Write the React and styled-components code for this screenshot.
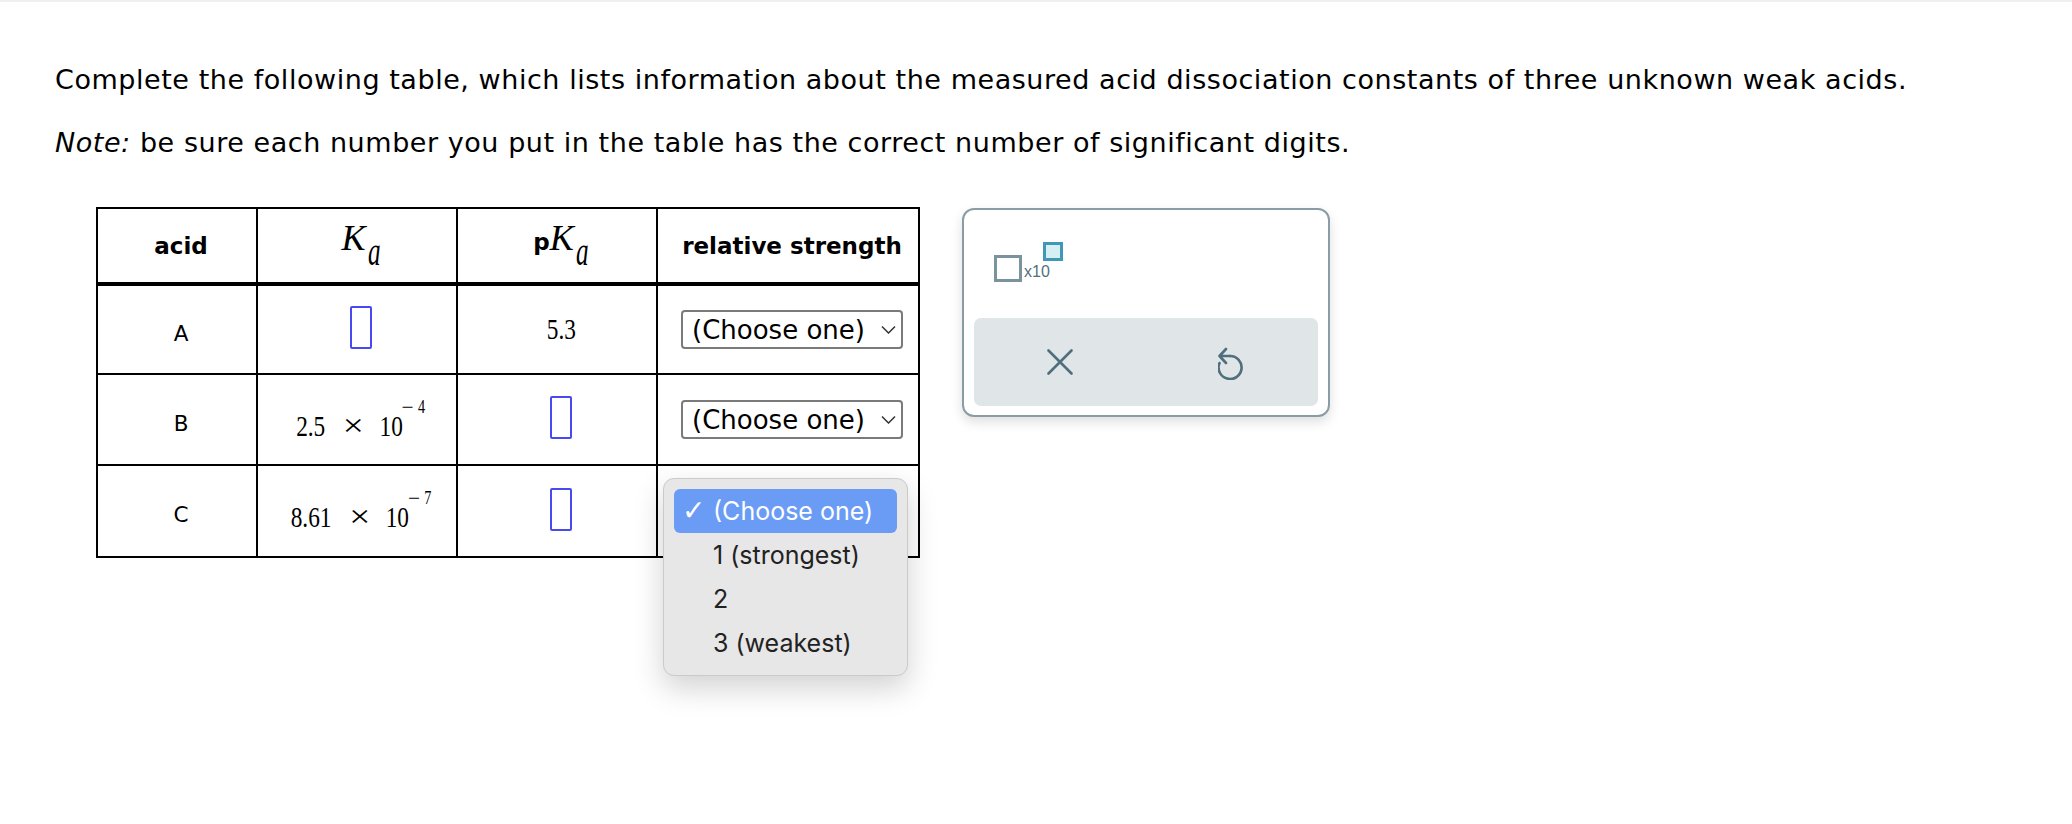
import React from 'react';
import styled, { createGlobalStyle } from 'styled-components';

const GlobalStyle = createGlobalStyle`
  html, body {
    margin: 0;
    padding: 0;
    background: #ffffff;
  }
  body {
    font-family: "DejaVu Sans", Verdana, sans-serif;
    color: #000000;
  }
`;

const Page = styled.div`
  box-sizing: border-box;
  min-height: 100vh;
  border-top: 2px solid #efefef;
  padding: 62px 0 40px 55px;
`;

const Intro = styled.div`
  display: flex;
  flex-direction: column;
  gap: 32px;
`;

const Prompt = styled.p`
  margin: 0;
  font-size: 27px;
  line-height: 31px;
  letter-spacing: 0.55px;
`;

const Workspace = styled.div`
  display: flex;
  align-items: flex-start;
  gap: 42px;
  margin: 49px 0 0 41px;
`;

const Table = styled.table`
  border-collapse: collapse;
  table-layout: fixed;
  width: 822px;
`;

const Row = styled.tr`
  height: ${p => p.$h}px;
`;

const Cell = styled.td`
  position: relative;
  border: 2px solid #000000;
  padding: 0 0 0 8px;
  text-align: center;
  vertical-align: middle;
  font-size: 21.5px;
  font-weight: normal;
`;

const HeadCell = styled(Cell).attrs({ as: 'th' })`
  border-bottom-width: 4px;
  font-size: 23px;
  font-weight: bold;
`;

const Letter = styled.span`
  display: inline-block;
  padding-top: 7px;
`;

const Italic = styled.span`
  font-family: "Liberation Serif", "Times New Roman", serif;
  font-style: italic;
  font-weight: normal;
  font-size: 36px;
  line-height: 1;
`;

const Sub = styled.span`
  display: inline-block;
  font-family: "Liberation Serif", "Times New Roman", serif;
  font-style: italic;
  font-weight: normal;
  font-size: 40px;
  line-height: 1;
  vertical-align: -15px;
  transform: scaleX(0.63);
  transform-origin: left center;
  margin: 0 -7px 0 2px;
`;

const Math = styled.span`
  display: inline-block;
  font-family: "Liberation Serif", "Times New Roman", serif;
  font-size: 29.5px;
  line-height: 1;
  white-space: nowrap;
  transform: scaleX(0.79);
  vertical-align: -5px;
`;

const Times = styled.span`
  display: inline-block;
  margin: 0 25px 0 27px;
  transform: scaleX(1.6) scaleY(1.05);
`;

const Sup = styled.span`
  font-size: 18px;
  vertical-align: 23px;
  margin-left: 1px;
`;

const Minus = styled.span`
  display: inline-block;
  margin-right: 8px;
  transform: scaleX(1.5);
`;

const AnswerBox = styled.span`
  display: inline-block;
  box-sizing: border-box;
  width: 22px;
  height: 43px;
  border: 2.5px solid #4949f2;
  border-radius: 2px;
  vertical-align: middle;
  margin-top: -4px;
`;

const SelectBox = styled.div`
  display: inline-flex;
  align-items: center;
  justify-content: space-between;
  box-sizing: border-box;
  width: 222px;
  height: 39px;
  padding: 0 5px 0 9px;
  border: 2px solid #7a7a7a;
  border-radius: 4px;
  background: #ffffff;
  font-size: 26px;
  line-height: 1;
  color: #000000;
  vertical-align: middle;
`;

const Menu = styled.ul`
  position: absolute;
  left: 5px;
  top: 12px;
  z-index: 5;
  box-sizing: border-box;
  width: 245px;
  margin: 0;
  padding: 10px;
  list-style: none;
  background: #e7e7e7;
  border: 1px solid #cacaca;
  border-radius: 11px;
  box-shadow: 0 12px 30px rgba(0, 0, 0, 0.18);
  font-family: Inter, "Liberation Sans", sans-serif;
  font-size: 25px;
  text-align: left;
`;

const MenuItem = styled.li`
  display: flex;
  align-items: center;
  height: 44px;
  padding-left: 8px;
  border-radius: 6px;
  color: ${p => p.$active ? '#ffffff' : '#222222'};
  background: ${p => p.$active ? '#6a9cf5' : 'transparent'};
`;

const Check = styled.span`
  width: 31px;
  font-family: "DejaVu Sans", sans-serif;
  font-size: 28px;
  font-weight: bold;
  line-height: 1;
`;

const Keypad = styled.div`
  box-sizing: border-box;
  width: 368px;
  height: 209px;
  margin-top: 1px;
  padding: 0 10px 9px;
  display: flex;
  flex-direction: column;
  border: 2px solid #8a9ca6;
  border-radius: 12px;
  background: #ffffff;
  box-shadow: 0 5px 12px rgba(0, 0, 0, 0.13);
`;

const ToolRow = styled.div`
  flex: 1;
  display: flex;
  align-items: flex-start;
  padding: 32px 0 0 20px;
`;

const SciButton = styled.div`
  display: flex;
  align-items: flex-end;
  height: 40px;
`;

const BaseSquare = styled.span`
  box-sizing: border-box;
  width: 28px;
  height: 27px;
  border: 3px solid #7b939f;
`;

const TenLabel = styled.span`
  margin: 0 0 2px 2px;
  font-family: "Liberation Sans", Arial, sans-serif;
  font-size: 16px;
  line-height: 1;
  color: #52707e;
`;

const ExpSquare = styled.span`
  align-self: flex-start;
  box-sizing: border-box;
  width: 20px;
  height: 19px;
  margin-left: -7px;
  border: 3px solid #3f98b6;
  background: #d6eff5;
`;

const ActionBar = styled.div`
  height: 88px;
  display: grid;
  grid-template-columns: 1fr 1fr;
  align-items: center;
  justify-items: center;
  border-radius: 7px;
  background: #e0e5e8;
`;

const IconButton = styled.button`
  display: flex;
  align-items: center;
  justify-content: center;
  padding: 0;
  border: 0;
  background: transparent;
  color: #4f6f7d;
`;

const Chevron = () => (
  <svg width="15" height="9" viewBox="0 0 15 9">
    <path d="M1 1.5 L7.5 8 L14 1.5" fill="none" stroke="#333" strokeWidth="1.5" />
  </svg>
);

const Select = () => (
  <SelectBox role="combobox">
    <span>(Choose one)</span>
    <Chevron />
  </SelectBox>
);

const Ka = ({ p }) => (
  <span>
    {p && 'p'}
    <Italic>K</Italic>
    <Sub>a</Sub>
  </span>
);

const Sci = ({ mantissa, exp }) => (
  <Math>
    {mantissa}
    <Times>×</Times>
    10
    <Sup><Minus>−</Minus>{exp}</Sup>
  </Math>
);

const App = () => {
  return (
    <>
      <GlobalStyle />
      <Page>
        <Intro>
          <Prompt>
            Complete the following table, which lists information about the measured acid dissociation constants of three unknown weak acids.
          </Prompt>
          <Prompt>
            <em>Note:</em> be sure each number you put in the table has the correct number of significant digits.
          </Prompt>
        </Intro>

        <Workspace>
          <Table>
            <colgroup>
              <col style={{ width: 160 }} />
              <col style={{ width: 200 }} />
              <col style={{ width: 200 }} />
              <col style={{ width: 262 }} />
            </colgroup>
            <thead>
              <Row $h={76}>
                <HeadCell>acid</HeadCell>
                <HeadCell><Ka /></HeadCell>
                <HeadCell><Ka p /></HeadCell>
                <HeadCell>relative strength</HeadCell>
              </Row>
            </thead>
            <tbody>
              <Row $h={90}>
                <Cell><Letter>A</Letter></Cell>
                <Cell><AnswerBox /></Cell>
                <Cell><Math>5.3</Math></Cell>
                <Cell><Select /></Cell>
              </Row>
              <Row $h={91}>
                <Cell><Letter>B</Letter></Cell>
                <Cell><Sci mantissa="2.5" exp="4" /></Cell>
                <Cell><AnswerBox /></Cell>
                <Cell><Select /></Cell>
              </Row>
              <Row $h={92}>
                <Cell><Letter>C</Letter></Cell>
                <Cell><Sci mantissa="8.61" exp="7" /></Cell>
                <Cell><AnswerBox /></Cell>
                <Cell>
                  <Select />
                  <Menu role="listbox">
                    <MenuItem $active><Check>✓</Check>(Choose one)</MenuItem>
                    <MenuItem><Check />1 (strongest)</MenuItem>
                    <MenuItem><Check />2</MenuItem>
                    <MenuItem><Check />3 (weakest)</MenuItem>
                  </Menu>
                </Cell>
              </Row>
            </tbody>
          </Table>

          <Keypad>
            <ToolRow>
              <SciButton>
                <BaseSquare />
                <TenLabel>x10</TenLabel>
                <ExpSquare />
              </SciButton>
            </ToolRow>
            <ActionBar>
              <IconButton aria-label="clear">
                <svg width="26" height="26" viewBox="0 0 26 26">
                  <path d="M1.5 1.5 L24.5 24.5 M24.5 1.5 L1.5 24.5" stroke="currentColor" strokeWidth="2.6" strokeLinecap="round" fill="none" />
                </svg>
              </IconButton>
              <IconButton aria-label="undo">
                <svg width="28" height="36" viewBox="0 0 28 36">
                  <path d="M12 12 A11.5 11.5 0 1 1 1.5 19" stroke="currentColor" strokeWidth="2.6" strokeLinecap="round" fill="none" />
                  <path d="M8 5 L1.5 12 L8 19 M1.5 12 H12" stroke="currentColor" strokeWidth="2.6" strokeLinecap="round" strokeLinejoin="round" fill="none" />
                </svg>
              </IconButton>
            </ActionBar>
          </Keypad>
        </Workspace>
      </Page>
    </>
  );
};

export default App;
